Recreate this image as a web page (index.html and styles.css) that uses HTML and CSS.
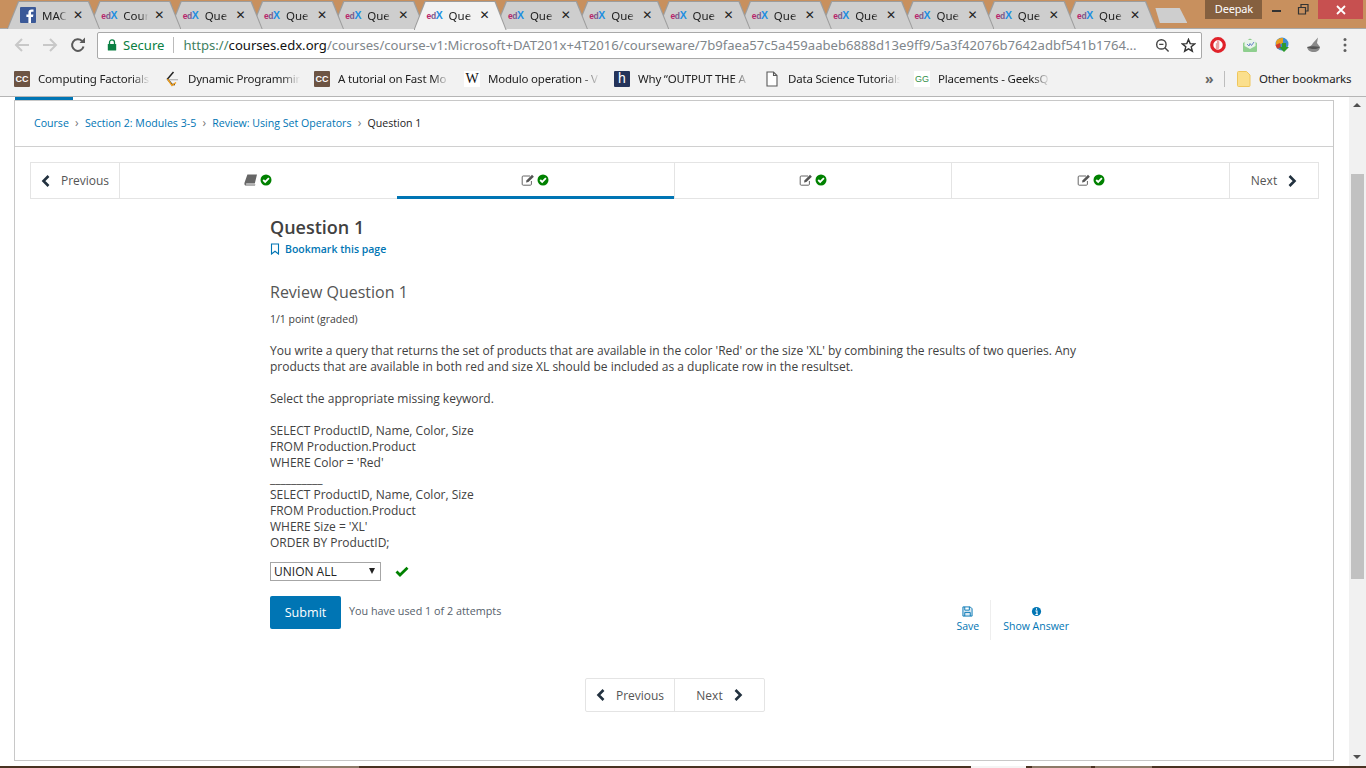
FILE: index.html
```html
<!DOCTYPE html>
<html lang="en">
<head>
  <meta charset="UTF-8" />
  <title>Question 1 | edX</title>
  <link rel="stylesheet" href="styles.css">
</head>
<body>

<svg class="sprites" width="0" height="0">
  <symbol id="chev-l" viewBox="0 0 10 12"><path d="M7.5 1 L2.5 6 L7.5 11" fill="none" stroke="currentColor" stroke-width="2.6"/></symbol>
  <symbol id="chev-r" viewBox="0 0 10 12"><path d="M2.5 1 L7.5 6 L2.5 11" fill="none" stroke="currentColor" stroke-width="2.6"/></symbol>
  <symbol id="ok" viewBox="0 0 12 12"><circle cx="6" cy="6" r="5.5" fill="#008100"/><path d="M3.2 6 L5.2 8 L8.9 4.2" fill="none" stroke="#fff" stroke-width="1.8"/></symbol>
  <symbol id="edit" viewBox="0 0 14 12"><path d="M9 2H2.2a1 1 0 0 0-1 1v7.2a1 1 0 0 0 1 1h7.2a1 1 0 0 0 1-1V7" fill="none" stroke="#666" stroke-width="1"/><path d="M5 8.6 L5.6 6.2 L11 .8 L12.9 2.7 L7.4 8 Z" fill="#555"/></symbol>
  <symbol id="book" viewBox="0 0 14 12"><path d="M3.4 .6H13L10.8 9.4H2.6C1.6 9.4 1.4 10.6 2.4 10.6H11.4L11 11.6H2C.4 11.6 .2 10 .6 8.6Z" fill="#666"/></symbol>
</svg>

<!-- Window frame and tabs -->
<header class="frame">
  <div class="tabs">
    <div class="tab">
      <svg class="fav" viewBox="0 0 16 16"><rect width="16" height="16" rx="1" fill="#3b5998"/><path d="M11 16V10h2l.4-2.5H11V6c0-.8.3-1.2 1.2-1.2h1.3V2.6c-.5 0-1.2-.1-1.9-.1-1.9 0-3.2 1.1-3.2 3.2v1.8H6.400V10h2v6z" fill="#fff"/></svg>
      <span class="tab-title">MAC</span><span class="tab-x">✕</span>
    </div>
    <div class="tab"><span class="fav edx">e<i>d</i><b>X</b></span><span class="tab-title">Cour</span><span class="tab-x">✕</span></div>
    <div class="tab"><span class="fav edx">e<i>d</i><b>X</b></span><span class="tab-title">Que</span><span class="tab-x">✕</span></div>
    <div class="tab"><span class="fav edx">e<i>d</i><b>X</b></span><span class="tab-title">Que</span><span class="tab-x">✕</span></div>
    <div class="tab"><span class="fav edx">e<i>d</i><b>X</b></span><span class="tab-title">Que</span><span class="tab-x">✕</span></div>
    <div class="tab active"><span class="fav edx">e<i>d</i><b>X</b></span><span class="tab-title">Que</span><span class="tab-x">✕</span></div>
    <div class="tab"><span class="fav edx">e<i>d</i><b>X</b></span><span class="tab-title">Que</span><span class="tab-x">✕</span></div>
    <div class="tab"><span class="fav edx">e<i>d</i><b>X</b></span><span class="tab-title">Que</span><span class="tab-x">✕</span></div>
    <div class="tab"><span class="fav edx">e<i>d</i><b>X</b></span><span class="tab-title">Que</span><span class="tab-x">✕</span></div>
    <div class="tab"><span class="fav edx">e<i>d</i><b>X</b></span><span class="tab-title">Que</span><span class="tab-x">✕</span></div>
    <div class="tab"><span class="fav edx">e<i>d</i><b>X</b></span><span class="tab-title">Que</span><span class="tab-x">✕</span></div>
    <div class="tab"><span class="fav edx">e<i>d</i><b>X</b></span><span class="tab-title">Que</span><span class="tab-x">✕</span></div>
    <div class="tab"><span class="fav edx">e<i>d</i><b>X</b></span><span class="tab-title">Que</span><span class="tab-x">✕</span></div>
    <div class="tab"><span class="fav edx">e<i>d</i><b>X</b></span><span class="tab-title">Que</span><span class="tab-x">✕</span></div>
  </div>
  <div class="new-tab"></div>
  <div class="user">Deepak</div>
  <div class="win-btns">
    <svg class="win-btn" viewBox="0 0 27 19"><rect x="8" y="10" width="9" height="2" fill="#333"/></svg>
    <svg class="win-btn" viewBox="0 0 27 19"><path d="M7.500 7.500h7v6.500h-7zM10 7V4.500h7v6.500h-2.500" fill="none" stroke="#333" stroke-width="1.200"/></svg>
    <div class="win-close">
      <svg width="10" height="10" viewBox="0 0 10 10"><path d="M1 1 L9 9 M9 1 L1 9" stroke="#fff" stroke-width="1.800"/></svg>
    </div>
  </div>
</header>

<!-- Toolbar -->
<div class="toolbar">
  <svg class="tool" viewBox="0 0 16 16"><path d="M15 8H2 M8 2 L2 8 L8 14" fill="none" stroke="#c8c8c8" stroke-width="2"/></svg>
  <svg class="tool" viewBox="0 0 16 16"><path d="M1 8H14 M8 2 L14 8 L8 14" fill="none" stroke="#c8c8c8" stroke-width="2"/></svg>
  <svg class="tool" viewBox="0 0 16 16"><path d="M13.500 9.500A5.800 5.800 0 1 1 12 4" fill="none" stroke="#5a5a5a" stroke-width="2"/><path d="M9.500 6H15V.5Z" fill="#5a5a5a"/></svg>
  <div class="omnibox">
    <svg class="lock" viewBox="0 0 10 12"><path d="M2.500 5V3.400a2.500 2.500 0 0 1 5 0V5" fill="none" stroke="#0b8043" stroke-width="1.300"/><rect x=".8" y="5" width="8.400" height="6.600" rx=".6" fill="#0b8043"/></svg>
    <span class="secure">Secure</span>
    <span class="url"><span class="url-scheme">https://</span><span class="url-host">courses.edx.org</span>/courses/course-v1:Microsoft+DAT201x+4T2016/courseware/7b9faea57c5a459aabeb6888d13e9ff9/5a3f42076b7642adbf541b1764...</span>
    <svg class="omni-icon" viewBox="0 0 16 16"><circle cx="6.800" cy="6.800" r="5" fill="none" stroke="#444" stroke-width="1.500"/><path d="M4.500 6.800H9 M10.500 10.500 L14.500 14.500" stroke="#444" stroke-width="1.500"/></svg>
    <svg class="omni-icon star" viewBox="0 0 16 16"><path d="M8 1.500 L9.800 6 L14.600 6.300 L10.900 9.400 L12.100 14.100 L8 11.500 L3.900 14.100 L5.100 9.400 L1.400 6.300 L6.200 6Z" fill="none" stroke="#333" stroke-width="1.500"/></svg>
  </div>
  <div class="exts">
    <svg class="ext" viewBox="0 0 16 16"><circle cx="8" cy="8" r="6.300" fill="#fff" stroke="#e0222a" stroke-width="3.200"/><path d="M5.800 12.500V6.500c0-.8 1.100-.8 1.100 0V4c0-.8 1.200-.8 1.200 0V4.500c0-.8 1.200-.8 1.200 0v6l-1 2z" fill="#e9a3a3"/></svg>
    <svg class="ext" viewBox="0 0 16 16"><path d="M1 6 L8 1.500 L15 6 V14 a1 1 0 0 1-1 1H2 a1 1 0 0 1-1-1Z" fill="#8fcf8f"/><path d="M2.500 3h11v6l-5.500 3L2.500 9z" fill="#e8f3ea"/><path d="M5 7 L7 9 L8 6.500 L9.500 8.500 L12 5" fill="none" stroke="#6a82c8" stroke-width="1"/></svg>
    <svg class="ext" viewBox="0 0 16 16"><circle cx="8" cy="7" r="6.500" fill="#3f8dd0"/><path d="M2 4.500 A7 7 0 0 1 9 1 L9 6 L2 9Z" fill="#e8a020"/><path d="M1.500 8 L6 6 L7 11 L3 11.500Z" fill="#d23b2f"/><path d="M8 6h4v4h3l-5 5-5-5h3z" fill="#2f9a2f"/></svg>
    <svg class="ext" viewBox="0 0 16 16"><path d="M12 .5 L11 6 L14 10 C14 13 11 15 8 15 C4 15 1.500 13 1 10 C4 10 6 8 7 6Z" fill="#8a8a8a"/><path d="M1 10 C5 9 9 9 14 10 C12 12.500 5 13 1 10Z" fill="#555"/></svg>
    <svg class="ext-menu" viewBox="0 0 4 16"><circle cx="2" cy="2.500" r="1.500" fill="#5f5f5f"/><circle cx="2" cy="8" r="1.500" fill="#5f5f5f"/><circle cx="2" cy="13.500" r="1.500" fill="#5f5f5f"/></svg>
  </div>
</div>

<!-- Bookmarks bar -->
<div class="bookmarks">
  <div class="bm"><span class="bm-ico cc">CC</span><span class="bm-text">Computing Factorials</span></div>
  <div class="bm">
    <svg class="bm-ico" viewBox="0 0 16 16"><path d="M9.500 1 L3.500 8 L8 13.500 L11 13.500" fill="none" stroke="#222" stroke-width="1.500"/><path d="M5 8.700 H14" stroke="#b5b5b5" stroke-width="1.300"/><path d="M3.500 8 L8 14.500 L12 11.500" fill="none" stroke="#f0a020" stroke-width="1.400"/></svg>
    <span class="bm-text">Dynamic Programmin</span>
  </div>
  <div class="bm"><span class="bm-ico cc">CC</span><span class="bm-text">A tutorial on Fast Mo</span></div>
  <div class="bm"><span class="bm-ico wiki">W</span><span class="bm-text">Modulo operation - V</span></div>
  <div class="bm"><span class="bm-ico hack">h</span><span class="bm-text">Why “OUTPUT THE A</span></div>
  <div class="bm">
    <svg class="bm-ico" viewBox="0 0 16 16"><path d="M3 1H9.500L13 4.500V15H3Z M9.500 1V4.500H13" fill="#fff" stroke="#5a5a5a" stroke-width="1.100"/></svg>
    <span class="bm-text">Data Science Tutorials</span>
  </div>
  <div class="bm"><span class="bm-ico geeks">GG</span><span class="bm-text">Placements - GeeksQ</span></div>
  <div class="bm-more">»</div>
  <div class="bm-sep"></div>
  <div class="bm-other">
    <svg class="folder" viewBox="0 0 14 16"><path d="M.5 1.500a1 1 0 0 1 1-1h8l3.500 3.500V14.500a1 1 0 0 1-1 1H1.500a1 1 0 0 1-1-1Z" fill="#fbdf8c" stroke="#efc65c"/></svg>
    <span>Other bookmarks</span>
  </div>
</div>

<!-- Page -->
<div class="viewport">
  <main class="page">
    <div class="course-tab"></div>
    <div class="course">
      <nav class="crumbs">
        <a>Course</a><span class="sep">›</span>
        <a>Section 2: Modules 3-5</a><span class="sep">›</span>
        <a>Review: Using Set Operators</a><span class="sep">›</span>
        <span class="crumb-now">Question 1</span>
      </nav>

      <div class="seq">
        <div class="seq-btn seq-prev"><svg class="chev"><use href="#chev-l"/></svg><span>Previous</span></div>
        <div class="seq-item"><svg class="seq-ico"><use href="#book"/></svg><svg class="seq-ok"><use href="#ok"/></svg></div>
        <div class="seq-item current"><svg class="seq-ico"><use href="#edit"/></svg><svg class="seq-ok"><use href="#ok"/></svg></div>
        <div class="seq-item"><svg class="seq-ico"><use href="#edit"/></svg><svg class="seq-ok"><use href="#ok"/></svg></div>
        <div class="seq-item"><svg class="seq-ico"><use href="#edit"/></svg><svg class="seq-ok"><use href="#ok"/></svg></div>
        <div class="seq-btn seq-next"><span>Next</span><svg class="chev"><use href="#chev-r"/></svg></div>
      </div>

      <section class="unit">
        <h1>Question 1</h1>
        <a class="bookmark">
          <svg viewBox="0 0 10 12"><path d="M1.500 1H8.500V11L5 8.200 1.500 11Z" fill="none" stroke="#0075b4" stroke-width="1.100"/></svg>
          Bookmark this page
        </a>
        <h2>Review Question 1</h2>
        <p class="points">1/1 point (graded)</p>
        <p class="prompt">You write a query that returns the set of products that are available in the color 'Red' or the size 'XL' by combining the results of two queries. Any products that are available in both red and size XL should be included as a duplicate row in the resultset.</p>
        <p class="prompt">Select the appropriate missing keyword.</p>
        <p class="prompt">SELECT ProductID, Name, Color, Size<br>FROM Production.Product<br>WHERE Color = 'Red'<br>__________<br>SELECT ProductID, Name, Color, Size<br>FROM Production.Product<br>WHERE Size = 'XL'<br>ORDER BY ProductID;</p>

        <div class="answer">
          <div class="select-wrap">
            <select class="keyword"><option>UNION ALL</option></select>
          </div>
          <svg class="tick" viewBox="0 0 14 11"><path d="M1.500 5.500 L5 9 L12.500 1.700" fill="none" stroke="#008100" stroke-width="2.800"/></svg>
        </div>

        <div class="actions">
          <button class="submit">Submit</button>
          <span class="attempts">You have used 1 of 2 attempts</span>
          <div class="tools">
            <a class="tool-link tool-save">
              <svg viewBox="0 0 12 12"><path d="M1 1H9L11 3V11H1Z M3 1V4.500H8V1 M3 11V7H9V11" fill="#dbe9f3" stroke="#0075b4" stroke-width="1"/></svg>
              Save
            </a>
            <a class="tool-link tool-show">
              <svg viewBox="0 0 12 12"><circle cx="6" cy="6" r="5" fill="#0075b4"/><path d="M6 2.500V4 M4.800 5.500H6.500V9 M4.800 9.200H7.500" stroke="#fff" stroke-width="1.200" fill="none"/></svg>
              Show Answer
            </a>
          </div>
        </div>

        <div class="bottom-nav">
          <div class="bottom-btn"><svg class="chev"><use href="#chev-l"/></svg><span>Previous</span></div>
          <div class="bottom-btn"><span>Next</span><svg class="chev"><use href="#chev-r"/></svg></div>
        </div>
      </section>
    </div>
  </main>

  <div class="scrollbar">
    <div class="arrow-up"></div>
    <div class="thumb"></div>
    <div class="arrow-down"></div>
  </div>
</div>

<div class="taskbar">
  <div class="task task-1"></div>
  <div class="task task-2"></div>
  <div class="task task-3"></div>
  <div class="task task-4"></div>
</div>

</body>
</html>
```

FILE: styles.css
```css
* {
  margin: 0;
  padding: 0;
  box-sizing: border-box;
}

body {
  width: 1366px;
  height: 768px;
  overflow: hidden;
  display: flex;
  flex-direction: column;
  background: #fff;
  font-family: "Open Sans", "Noto Sans", sans-serif;
  color: #414141;
}

.sprites {
  position: absolute;
}

/* FRAME */
.frame {
  height: 29px;
  flex: none;
  display: flex;
  background: #c8905e;
  border-bottom: 1px solid #a9a9a9;
}

.tabs {
  flex: none;
  display: flex;
  margin-left: 7px;
  padding-top: 1px;
}

.tab {
  position: relative;
  flex: none;
  width: 93px;
  height: 28px;
  margin-right: -11.7px;
  padding-left: 13px;
  display: flex;
  align-items: center;
  background: #9d9d9d;
  clip-path: polygon(0 100%, 11px 0, 82px 0, 100% 100%);
  font-family: "Noto Sans", sans-serif;
  font-size: 11.5px;
  color: #222;
}

.tab::before {
  content: "";
  position: absolute;
  inset: 1px 1px 0 1px;
  background: #cecece;
  clip-path: polygon(0 100%, 11px 0, 80px 0, 100% 100%);
}

.tab:nth-child(1) { z-index: 14; }
.tab:nth-child(2) { z-index: 13; }
.tab:nth-child(3) { z-index: 12; }
.tab:nth-child(4) { z-index: 11; }
.tab:nth-child(5) { z-index: 10; }
.tab:nth-child(6) { z-index: 20; }
.tab:nth-child(7) { z-index: 8; }
.tab:nth-child(8) { z-index: 7; }
.tab:nth-child(9) { z-index: 6; }
.tab:nth-child(10) { z-index: 5; }
.tab:nth-child(11) { z-index: 4; }
.tab:nth-child(12) { z-index: 3; }
.tab:nth-child(13) { z-index: 2; }
.tab:nth-child(14) { z-index: 1; }

.tab.active {
  height: 29px;
  padding-bottom: 1px;
}

.tab.active::before {
  inset: 1px 1px 0 1px;
  background: #f2f2f2;
}

.fav {
  position: relative;
  flex: none;
  width: 16px;
  height: 16px;
}

.edx {
  display: block;
  font-family: "Liberation Sans", sans-serif;
  font-size: 8.5px;
  letter-spacing: -0.4px;
  line-height: 16px;
  font-weight: bold;
  color: #b8246b;
  white-space: nowrap;
}

.edx i {
  font-style: normal;
  color: #7a5a8a;
}

.edx b {
  color: #1e8fe1;
  font-size: 10.5px;
}

.tab-title {
  position: relative;
  flex: none;
  width: 25px;
  margin-left: 6px;
  overflow: hidden;
  white-space: nowrap;
  -webkit-mask-image: linear-gradient(to right, #000 70%, transparent);
  mask-image: linear-gradient(to right, #000 70%, transparent);
}

.tab-x {
  position: relative;
  flex: none;
  width: 12px;
  margin-left: 5px;
  font-family: "DejaVu Sans", sans-serif;
  font-size: 12px;
  font-weight: bold;
  text-align: center;
  color: #222;
}

.new-tab {
  flex: none;
  width: 32px;
  height: 15px;
  margin: 8px 0 0 10px;
  background: #cecece;
  clip-path: polygon(0 0, 76% 0, 100% 100%, 14% 100%);
}

.user {
  flex: none;
  width: 57px;
  height: 19px;
  margin-left: 18px;
  background: #85603f;
  color: #fff;
  font-family: "Noto Sans", sans-serif;
  font-size: 11px;
  letter-spacing: -0.2px;
  line-height: 18px;
  text-align: center;
}

.win-btns {
  flex: none;
  display: flex;
  margin-left: 2px;
}

.win-btn {
  width: 27px;
  height: 19px;
}

.win-close {
  width: 45px;
  height: 19px;
  background: #c75050;
  display: flex;
  align-items: center;
  justify-content: center;
}

/* TOOLBAR */
.toolbar {
  height: 32px;
  flex: none;
  display: flex;
  align-items: center;
  background: #f2f2f2;
  padding: 0 0 0 14px;
}

.tool {
  flex: none;
  width: 16px;
  height: 16px;
  margin-right: 12px;
}

.omnibox {
  flex: none;
  width: 1105px;
  height: 27px;
  margin: 0 0 0 -1px;
  padding: 0 5px 0 9px;
  display: flex;
  align-items: center;
  background: #fff;
  border: 1px solid #a9a9a9;
  border-radius: 2px;
  font-family: "Noto Sans", sans-serif;
  font-size: 13.1px;
  color: #80868b;
}

.lock {
  flex: none;
  width: 10px;
  height: 12px;
}

.secure {
  margin-left: 6px;
  padding-right: 9px;
  border-right: 1px solid #bbb;
  line-height: 16px;
  color: #0b8043;
}

.url {
  flex: 1;
  margin-left: 9px;
  white-space: nowrap;
  overflow: hidden;
}

.url-scheme { color: #3f7f5f; }
.url-host { color: #111; }

.omni-icon {
  flex: none;
  width: 15px;
  height: 15px;
  margin-left: 11px;
}

.exts {
  display: flex;
  align-items: center;
  margin-left: 8px;
}

.ext {
  width: 16px;
  height: 16px;
  margin-right: 16px;
}

.ext-menu {
  width: 4px;
  height: 16px;
  margin-left: 5px;
}

/* BOOKMARKS */
.bookmarks {
  height: 36px;
  flex: none;
  display: flex;
  align-items: center;
  padding-left: 14px;
  background: #f2f2f2;
  border-bottom: 1px solid #b5b5b5;
  font-family: "Noto Sans", sans-serif;
  font-size: 11.5px;
  letter-spacing: -0.2px;
  color: #222;
}

.bm {
  flex: none;
  width: 150px;
  display: flex;
  align-items: center;
}

.bm-ico {
  flex: none;
  width: 16px;
  height: 16px;
  display: block;
  letter-spacing: 0;
}

.cc {
  background: #6d5443;
  border-radius: 1px;
  color: #fff;
  font-family: "Liberation Sans", sans-serif;
  font-size: 9px;
  font-weight: bold;
  line-height: 16px;
  text-align: center;
}

.wiki {
  background: #fff;
  color: #111;
  font-family: "Liberation Serif", serif;
  font-size: 14px;
  line-height: 16px;
  text-align: center;
}

.hack {
  background: #24335a;
  border-radius: 1px;
  color: #fff;
  font-family: "Liberation Sans", sans-serif;
  font-size: 14px;
  line-height: 15px;
  text-align: center;
}

.geeks {
  background: #fff;
  color: #2f8d46;
  font-family: "Liberation Sans", sans-serif;
  font-size: 9px;
  line-height: 16px;
  text-align: center;
}

.bm-text {
  width: 118px;
  margin-left: 8px;
  overflow: hidden;
  white-space: nowrap;
  -webkit-mask-image: linear-gradient(to right, #000 80%, transparent 95%);
  mask-image: linear-gradient(to right, #000 80%, transparent 95%);
}

.bm-more {
  flex: none;
  width: 19px;
  margin-left: 141px;
  font-size: 14px;
  font-weight: bold;
  color: #666;
  line-height: 16px;
}

.bm-sep {
  flex: none;
  width: 1px;
  height: 16px;
  background: #bdbdbd;
}

.bm-other {
  flex: none;
  display: flex;
  align-items: center;
  margin-left: 12px;
}

.folder {
  width: 14px;
  height: 16px;
  margin-right: 8px;
}

/* PAGE */
.viewport {
  flex: 1;
  min-height: 0;
  display: flex;
}

.page {
  flex: 1;
  padding: 0 15px 0 14px;
}

.course-tab {
  width: 58px;
  height: 3px;
  margin-left: 1px;
  background: #0075b4;
}

.course {
  height: 661px;
  border: 1px solid #c8c8c8;
}

.crumbs {
  height: 46px;
  padding: 0 0 2px 19px;
  display: flex;
  align-items: center;
  border-bottom: 1px solid #d0d0d0;
  font-size: 10.6px;
}

.crumbs a {
  color: #0075b4;
}

.crumbs .sep {
  width: 16px;
  font-size: 12px;
  text-align: center;
  color: #777;
}

.crumb-now {
  color: #222;
}

.seq {
  display: flex;
  height: 37px;
  margin: 15px 14px 0 15px;
  border: 1px solid #e4e4e4;
  font-size: 12px;
  color: #555;
}

.seq-btn {
  flex: none;
  width: 89px;
  display: flex;
  align-items: center;
  justify-content: center;
  gap: 10px;
}

.seq-prev {
  border-right: 1px solid #e4e4e4;
}

.seq-next {
  border-left: 1px solid #e4e4e4;
}

.chev {
  width: 10px;
  height: 12px;
  color: #22313f;
}

.seq-item {
  flex: 1;
  display: flex;
  align-items: center;
  justify-content: center;
  gap: 2px;
  padding-bottom: 1px;
  border-left: 1px solid #e4e4e4;
}

.seq-item:nth-child(2) {
  border-left: 0;
}

.seq-item.current {
  margin-bottom: -1px;
  padding-bottom: 0;
  border-left: 0;
  border-bottom: 3px solid #0075b4;
}

.seq-ico {
  width: 14px;
  height: 12px;
}

.seq-ok {
  width: 12px;
  height: 12px;
}

.unit {
  width: 810px;
  margin-left: 255px;
  padding-top: 16px;
}

h1 {
  font-size: 18px;
  font-weight: 600;
  line-height: 24px;
  color: #414141;
}

.bookmark {
  display: flex;
  align-items: center;
  gap: 5px;
  height: 16px;
  margin-top: 2px;
  font-size: 10.5px;
  font-weight: 600;
  color: #0075b4;
}

.bookmark svg {
  width: 10px;
  height: 12px;
}

h2 {
  margin-top: 25px;
  font-size: 16px;
  font-weight: 400;
  line-height: 20px;
  color: #555;
}

.points {
  margin-top: 9px;
  font-size: 10.5px;
  line-height: 16px;
  color: #414141;
}

.prompt {
  margin-top: 16px;
  font-size: 12px;
  line-height: 16px;
  color: #414141;
}

.answer {
  display: flex;
  align-items: center;
  margin-top: 11px;
}

.select-wrap {
  position: relative;
  width: 111px;
  height: 19px;
}

.select-wrap::after {
  content: "";
  position: absolute;
  right: 6px;
  top: 6px;
  border-left: 3.5px solid transparent;
  border-right: 3.5px solid transparent;
  border-top: 6px solid #222;
}

.keyword {
  display: block;
  width: 100%;
  height: 100%;
  padding-left: 3px;
  appearance: none;
  background: #fff;
  border: 1px solid #a6a6a6;
  border-radius: 0;
  font-family: "Open Sans", sans-serif;
  font-size: 12px;
  color: #222;
}

.tick {
  width: 14px;
  height: 11px;
  margin-left: 14px;
}

.actions {
  position: relative;
  display: flex;
  align-items: flex-start;
  margin-top: 15px;
  height: 46px;
}

.submit {
  width: 71px;
  height: 33px;
  background: #0075b4;
  border: 0;
  border-radius: 2px;
  color: #fff;
  font-family: "Open Sans", sans-serif;
  font-size: 12.6px;
}

.attempts {
  margin: 7px 0 0 8px;
  font-size: 10.8px;
  line-height: 16px;
  color: #56616b;
}

.tools {
  display: flex;
  margin-left: auto;
  margin-top: 4px;
  margin-right: 5px;
  font-size: 10.5px;
  color: #0075b4;
}

.tool-link {
  display: flex;
  flex-direction: column;
  align-items: center;
  height: 40px;
  padding-top: 6px;
  line-height: 18px;
}

.tool-link svg {
  width: 11px;
  height: 11px;
}

.tool-save {
  padding-right: 11px;
  border-right: 1px solid #eee;
}

.tool-show {
  padding-left: 12px;
  padding-right: 6px;
}

.bottom-nav {
  display: flex;
  width: 180px;
  height: 34px;
  margin: 36px 0 0 315px;
  border: 1px solid #e4e4e4;
  border-radius: 2px;
  font-size: 12px;
  color: #555;
}

.bottom-btn {
  flex: 1;
  display: flex;
  align-items: center;
  justify-content: center;
  gap: 10px;
}

.bottom-btn:first-child {
  flex: none;
  width: 89px;
  border-right: 1px solid #e4e4e4;
}

/* SCROLLBAR */
.scrollbar {
  position: relative;
  flex: none;
  width: 17px;
  height: 100%;
  background: #f1f1f1;
}

.thumb {
  position: absolute;
  top: 77px;
  left: 2px;
  width: 13px;
  height: 405px;
  background: #c1c1c1;
}

.arrow-up,
.arrow-down {
  position: absolute;
  left: 4px;
  border-left: 4px solid transparent;
  border-right: 4px solid transparent;
}

.arrow-up {
  top: 6px;
  border-bottom: 4px solid #505050;
}

.arrow-down {
  bottom: 7px;
  border-top: 4px solid #505050;
}

.taskbar {
  height: 2px;
  flex: none;
  display: flex;
  background: #4a3322;
}

.task {
  flex: none;
  height: 2px;
  background: #8d7a68;
}

.task-1 {
  width: 59px;
  margin-left: 300px;
}

.task-2 {
  width: 55px;
  margin-left: 612px;
  background: #f4f4f4;
}

.task-3 {
  width: 59px;
  margin-left: 6px;
}

.task-4 {
  width: 57px;
  margin-left: 4px;
}
```
